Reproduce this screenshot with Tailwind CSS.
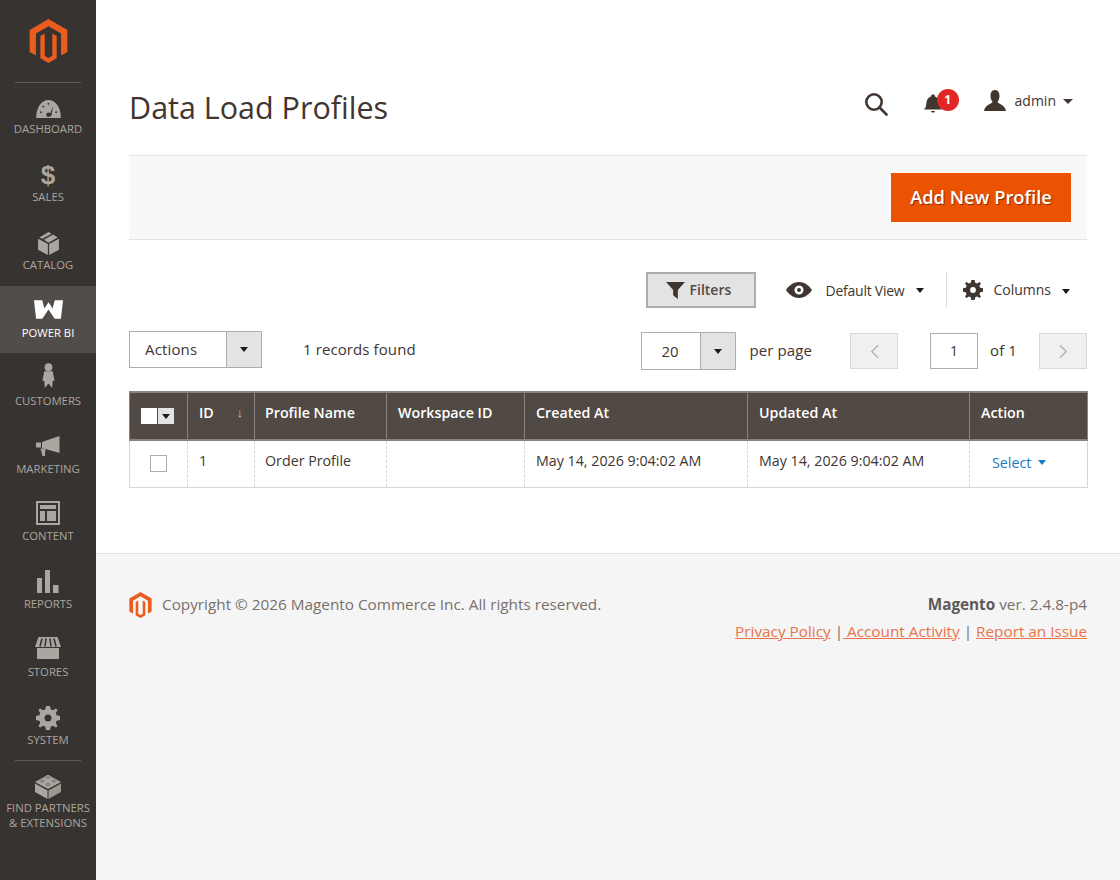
<!DOCTYPE html>
<html lang="en">
<head>
<meta charset="utf-8">
<title>Data Load Profiles</title>
<script src="https://cdn.jsdelivr.net/npm/@tailwindcss/browser@4"></script>
</head>
<body class="bg-[#f5f5f5] font-['Open_Sans',sans-serif] text-[#41362f]">
<div class="flex min-h-[880px] w-[1120px] overflow-hidden">
  <aside class="w-[96px] shrink-0 bg-[#373330] text-[#aaa6a0] text-[11.3px] leading-[15px] text-center">
    <div class="h-[83px] border-b border-[#5f5b57] mx-[15px] flex justify-center pt-[19px] box-border">
      <svg viewBox="0 0 24 28" class="w-[39px] h-[44px]" fill="#eb5c1f"><path d="M12 0 24 7V21L20 23.3V9.3L12 4.6 4 9.3V23.3L0 21V7Z"/><path d="M12 28 6.8 25V10.8L9.6 9.2V23.4L12 24.8 14.4 23.4V9.2L17.2 10.8V25Z"/></svg>
    </div>
    <nav>
      <a class="h-[68px] flex flex-col items-center pt-[16px] box-border">
        <svg viewBox="0 0 26 20" class="w-[25px] h-[19px]" fill="#aaa6a0"><path d="M0 20C0 8 6 1 13 1S26 8 26 20Z"/><path d="M14 17 18 7 16 18Z" fill="#373330"/><circle cx="13" cy="16.5" r="2.4" fill="#373330"/><circle cx="5" cy="14" r="1" fill="#373330"/><circle cx="7.5" cy="8" r="1" fill="#373330"/><circle cx="13" cy="5" r="1" fill="#373330"/><circle cx="21" cy="14" r="1" fill="#373330"/></svg>
        <span class="mt-[3px]">DASHBOARD</span>
      </a>
      <a class="h-[68px] flex flex-col items-center pt-[12px] box-border">
        <span class="h-[25px] text-[26px] leading-[25px] font-bold font-['Liberation_Sans',sans-serif]">$</span>
        <span class="mt-[1px]">SALES</span>
      </a>
      <a class="h-[67px] flex flex-col items-center pt-[12px] box-border">
        <svg viewBox="0 0 20 22" class="w-[21px] h-[23px] mt-[1px]" fill="#aaa6a0"><path d="M0 6.5 9.4 11.5V22L0 17Z"/><path d="M20 6.5 10.6 11.5V22L20 17Z"/><path d="M10 0 13 1.6 4.2 6.4 1.2 5.3Z"/><path d="M14.4 2.4 18.8 5.3 10 10.3 5.6 7.4Z"/></svg>
        <span class="mt-[2px]">CATALOG</span>
      </a>
      <a class="h-[67px] flex flex-col items-center pt-[14px] box-border bg-[#524d49] text-white">
        <svg viewBox="0 0 28 18" class="w-[29px] h-[19px]" fill="#fff"><path d="M0 0H8L10 8 14 2 18 8 20 0H28L26 18H20L14 9 8 18H2Z"/></svg>
        <span class="mt-[6px]">POWER BI</span>
      </a>
      <a class="h-[68px] flex flex-col items-center pt-[9px] box-border">
        <svg viewBox="0 0 14 27" class="w-[13px] h-[27px]" fill="#aaa6a0"><circle cx="7" cy="4.5" r="4.2"/><path d="M2.5 9H11.5L13.5 19 11.5 19.5 11 27 7 22 3 27 2.500 19.500 .5 19Z"/></svg>
        <span class="mt-[4px]">CUSTOMERS</span>
      </a>
      <a class="h-[68px] flex flex-col items-center pt-[15px] box-border">
        <svg viewBox="0 0 24 20" class="w-[24px] h-[20px]" fill="#aaa6a0"><path d="M6 6 23.500 0V17L6 12Z"/><path d="M0 6.500H5V11.500H0Z"/><path d="M4.500 12.500H9.500L9 20H6.500Z"/></svg>
        <span class="mt-[5px]">MARKETING</span>
      </a>
      <a class="h-[68px] flex flex-col items-center pt-[12px] box-border">
        <svg viewBox="0 0 24 24" class="w-[24px] h-[24px]" fill="#aaa6a0"><path fill-rule="evenodd" d="M0 0H24V24H0ZM2 2V22H22V2Z"/><path d="M4 4H20V8H4ZM4 10H9V20H4ZM11 10H20V20H11Z"/></svg>
        <span class="mt-[3px]">CONTENT</span>
      </a>
      <a class="h-[68px] flex flex-col items-center pt-[13px] box-border">
        <svg viewBox="0 0 22 23" class="w-[22px] h-[23px]" fill="#aaa6a0"><path d="M0 8H5V23H0ZM8 0H13V23H8ZM16 15H21.500V23H16Z"/></svg>
        <span class="mt-[3px]">REPORTS</span>
      </a>
      <a class="h-[68px] flex flex-col items-center pt-[12px] box-border">
        <svg viewBox="0 0 26 22" class="w-[26px] h-[22px]" fill="#aaa6a0"><path d="M2 11H24V22H2Z"/><path d="M3.500 0H22.500L26 10H0Z"/><path d="M7 1.500 5 9.500M11 1.500 10 9.500M15 1.500 16 9.500M19 1.500 21 9.500" stroke="#373330" stroke-width="1.600"/></svg>
        <span class="mt-[5px]">STORES</span>
      </a>
      <a class="h-[67px] flex flex-col items-center pt-[13px] box-border">
        <svg viewBox="0 0 24 24" class="w-[24px] h-[24px]" fill="#aaa6a0"><path fill-rule="evenodd" d="M10 0H14L14.700 3.300 17 4.300 19.900 2.400 21.600 4.100 19.700 7 20.700 9.300 24 10V14L20.700 14.700 19.700 17 21.600 19.900 19.900 21.600 17 19.700 14.700 20.700 14 24H10L9.300 20.700 7 19.700 4.100 21.600 2.400 19.900 4.300 17 3.300 14.700 0 14V10L3.300 9.300 4.300 7 2.400 4.100 4.100 2.400 7 4.300 9.300 3.300ZM12 8.500A3.500 3.500 0 1 0 12 15.500 3.500 3.500 0 0 0 12 8.500Z"/></svg>
        <span class="mt-[2px]">SYSTEM</span>
      </a>
      <div class="mx-[15px] border-t border-[#5f5b57] h-[13px] box-border"></div>
      <a class="flex flex-col items-center box-border">
        <svg viewBox="0 0 26 26" class="w-[26px] h-[26px]" fill="#aaa6a0"><path d="M13 2 26 9 13 16 0 9Z"/><path d="M0 10.500 12.500 17.500V26L0 19Z"/><path d="M26 10.500 13.500 17.500V26L26 19Z" fill="#9b9791"/><ellipse cx="13" cy="4.500" rx="3" ry="2" fill="#8a8681" stroke="#aaa6a0" stroke-width=".6"/><ellipse cx="7" cy="8" rx="3" ry="2" fill="#8a8681" stroke="#aaa6a0" stroke-width=".6"/><ellipse cx="19" cy="8" rx="3" ry="2" fill="#8a8681" stroke="#aaa6a0" stroke-width=".6"/><ellipse cx="13" cy="11.500" rx="3" ry="2" fill="#8a8681" stroke="#aaa6a0" stroke-width=".6"/></svg>
        <span class="mt-[1px]">FIND PARTNERS<br>&amp; EXTENSIONS</span>
      </a>
    </nav>
  </aside>

  <div class="flex-1 flex flex-col min-w-0">
    <main class="bg-white h-[554px] box-border border-b border-[#e3e3e3] pl-[33px] pr-[33px]">
      <header class="h-[155px] flex items-start pt-[87px] box-border relative">
        <h1 class="text-[30.500px] leading-[40px] text-[#41362f] font-normal">Data Load Profiles</h1>
        <div class="ml-auto flex items-center -mt-[2px] h-[30px]">
          <svg viewBox="0 0 24 24" class="w-[24px] h-[24px] mt-[8px] mr-[36px]" fill="none" stroke="#41362f" stroke-width="2.600"><circle cx="10" cy="10" r="7.700"/><path d="M15.500 15.500 22.500 22.500" stroke-linecap="round"/></svg>
          <div class="relative w-[34px] h-[30px] mt-[6px] mr-[26px]">
            <svg viewBox="0 0 18 20" class="absolute left-0 top-[6px] w-[18px] h-[20px]" fill="#41362f"><path d="M0 15.500C2.500 13 2 11 2.500 8S5 3 7 2.500C7 1 8 .5 9 .5S11 1 11 2.500C13 3 15 5 15.500 8S15.500 13 18 15.500Z"/><path d="M7 17H11C11 19 7 19 7 17Z"/></svg>
            <span class="absolute left-[13px] top-[1px] w-[22px] h-[22px] rounded-full bg-[#e22626] text-white text-[12px] leading-[22px] font-bold text-center">1</span>
          </div>
          <svg viewBox="0 0 22 21" class="w-[22px] h-[21px] mt-[0px] mr-[9px]" fill="#41362f"><path d="M11 0C14.500 0 15.500 3 15.500 6S14.500 10 13.500 12C14 14 21 14.500 22 21H0C1 14.500 8 14 8.500 12 7.500 10 6.500 9 6.500 6S7.500 0 11 0Z"/></svg>
          <span class="text-[14px] leading-[20px] mt-[2px]">admin</span>
          <span class="ml-[7px] mr-[14px] mt-[3px] w-0 h-0 border-x-[5px] border-x-transparent border-t-[5px] border-t-[#41362f]"></span>
        </div>
      </header>

      <section class="h-[85px] box-border bg-[#f8f8f8] border-y border-[#e3e3e3] flex items-center justify-end pr-[16px]">
        <button class="w-[180px] h-[49px] pb-[2px] bg-[#eb5202] text-white text-[18.300px] font-semibold [text-shadow:1px_1px_1px_rgba(0,0,0,.45)]">Add New Profile</button>
      </section>

      <section class="mt-[32px] h-[36px] flex items-center text-[14px]">
        <button class="ml-auto w-[110px] h-[36px] box-border bg-[#e3e3e3] border-2 border-[#adadad] flex items-center justify-start pl-[18px] gap-[5px] font-semibold text-[#514943]">
          <svg viewBox="0 0 20 18" class="w-[19px] h-[17px]" fill="#41362f"><path d="M0 0H20L12.500 8.500V18L7.500 14V8.500Z"/></svg>
          <span class="-mt-[2px]">Filters</span>
        </button>
        <svg viewBox="0 0 26 16" class="w-[26px] h-[16px] ml-[30px]" fill="#41362f"><path fill-rule="evenodd" d="M13 0C19 0 24 4.500 26 8 24 11.500 19 16 13 16S2 11.500 0 8C2 4.500 7 0 13 0ZM13 3.500A4.500 4.500 0 1 0 13 12.500 4.500 4.500 0 0 0 13 3.500Z"/><circle cx="13" cy="8" r="2"/></svg>
        <span class="ml-[14px] tracking-[-0.25px]">Default View</span>
        <span class="ml-[12px] w-0 h-0 border-x-[4.500px] border-x-transparent border-t-[5px] border-t-[#1f1a17]"></span>
        <span class="ml-[22px] w-px h-[35px] bg-[#dcdcdc]"></span>
        <svg viewBox="0 0 24 24" class="w-[20px] h-[20px] ml-[16px]" fill="#41362f"><path fill-rule="evenodd" d="M10 0H14L14.700 3.300 17 4.300 19.900 2.400 21.600 4.100 19.700 7 20.700 9.300 24 10V14L20.700 14.700 19.700 17 21.600 19.900 19.900 21.600 17 19.700 14.700 20.700 14 24H10L9.300 20.700 7 19.700 4.100 21.600 2.400 19.900 4.300 17 3.300 14.700 0 14V10L3.300 9.300 4.300 7 2.400 4.100 4.100 2.400 7 4.300 9.300 3.300ZM12 8.500A3.500 3.500 0 1 0 12 15.500 3.500 3.500 0 0 0 12 8.500Z"/></svg>
        <span class="ml-[10px] -mt-[2px]">Columns</span>
        <span class="ml-[11px] mr-[17px] mt-[2px] w-0 h-0 border-x-[4.500px] border-x-transparent border-t-[5px] border-t-[#1f1a17]"></span>
      </section>

      <section class="mt-[24px] h-[38px] flex items-center text-[15px]">
        <div class="w-[133px] h-[37px] box-border border border-[#adadad] flex -mt-[3px]">
          <span class="flex-1 pl-[15px] leading-[34px] tracking-[.15px]">Actions</span>
          <span class="w-[35px] bg-[#e3e3e3] border-l border-[#adadad] flex items-center justify-center"><span class="w-0 h-0 border-x-[4.500px] border-x-transparent border-t-[5px] border-t-[#1f1a17]"></span></span>
        </div>
        <span class="ml-[41px] -mt-[4px] tracking-[.1px]">1 records found</span>
        <div class="ml-auto w-[95px] h-[38px] box-border border border-[#adadad] flex">
          <span class="flex-1 pl-[19px] leading-[36px]">20</span>
          <span class="w-[35px] bg-[#e3e3e3] border-l border-[#adadad] flex items-center justify-center"><span class="w-0 h-0 border-x-[4.500px] border-x-transparent border-t-[5px] border-t-[#1f1a17]"></span></span>
        </div>
        <span class="ml-[13px] -mt-[1px] tracking-[.12px]">per page</span>
        <span class="ml-[38px] w-[48px] h-[36px] box-border bg-[#f0f0f0] border border-[#d9d9d9] flex items-center justify-center">
          <svg viewBox="0 0 10 16" class="w-[9px] h-[15px]" fill="none" stroke="#b0b0b0" stroke-width="1.500"><path d="M9 1 2 8 9 15"/></svg>
        </span>
        <span class="ml-[32px] w-[48px] h-[36px] box-border border border-[#adadad] text-center leading-[34px] text-[14px]">1</span>
        <span class="ml-[12px] tracking-[.1px] -mt-[1px]">of 1</span>
        <span class="ml-[22px] w-[48px] h-[36px] box-border bg-[#f0f0f0] border border-[#d9d9d9] flex items-center justify-center">
          <svg viewBox="0 0 10 16" class="w-[9px] h-[15px]" fill="none" stroke="#b0b0b0" stroke-width="1.500"><path d="M1 1 8 8 1 15"/></svg>
        </span>
      </section>

      <table class="mt-[21px] w-[958px] table-fixed border-collapse text-[14.250px] text-left">
        <colgroup>
          <col class="w-[58px]"><col class="w-[67px]"><col class="w-[132px]"><col class="w-[138px]"><col class="w-[223px]"><col class="w-[222px]"><col class="w-[118px]">
        </colgroup>
        <thead>
          <tr class="h-[48px] bg-[#514943] text-white font-semibold border-y-2 border-y-[#8a837e]">
            <th class="border-x border-[#8a837e] font-semibold pb-[6px]"><span class="flex pl-[11px] gap-[1px] mt-[6px]"><span class="w-[16px] h-[16px] bg-white"></span><span class="w-[16px] h-[16px] bg-[#e3e3e3] flex items-center justify-center"><span class="w-0 h-0 border-x-[4px] border-x-transparent border-t-[5px] border-t-[#1f1a17]"></span></span></span></th>
            <th class="border-x border-[#8a837e] font-semibold pl-[11px] pb-[6px] relative">ID<span class="absolute right-[11px] top-[10px] text-[#c9c5c2] text-[13px] font-semibold">↓</span></th>
            <th class="border-x border-[#8a837e] font-semibold pl-[10px] pb-[6px]">Profile Name</th>
            <th class="border-x border-[#8a837e] font-semibold pl-[11px] pb-[6px]">Workspace ID</th>
            <th class="border-x border-[#8a837e] font-semibold pl-[11px] pb-[6px]">Created At</th>
            <th class="border-x border-[#8a837e] font-semibold pl-[11px] pb-[6px]">Updated At</th>
            <th class="border-x border-[#8a837e] font-semibold pl-[11px] pb-[6px]">Action</th>
          </tr>
        </thead>
        <tbody>
          <tr class="h-[47px] border-b border-[#d6d6d6]">
            <td class="border-l border-[#d6d6d6] border-r border-r-[#d6d6d6] [border-right-style:dashed] text-center align-middle"><span class="inline-block w-[17px] h-[17px] border border-[#adadad] align-middle -mt-[4px]"></span></td>
            <td class="border-r border-dashed border-[#d6d6d6] pl-[11px] pb-[6px]">1</td>
            <td class="border-r border-dashed border-[#d6d6d6] pl-[10px] pb-[6px]">Order Profile</td>
            <td class="border-r border-dashed border-[#d6d6d6]"></td>
            <td class="border-r border-dashed border-[#d6d6d6] pl-[11px] pb-[6px]">May 14, 2026 9:04:02 AM</td>
            <td class="border-r border-dashed border-[#d6d6d6] pl-[11px] pb-[6px]">May 14, 2026 9:04:02 AM</td>
            <td class="border-r border-[#d6d6d6] pl-[22px] text-[#1979c3] pb-[3px]"><span class="inline-flex items-center gap-[7px]">Select<span class="w-0 h-0 border-x-[4.500px] border-x-transparent border-t-[5px] border-t-[#1979c3]"></span></span></td>
          </tr>
        </tbody>
      </table>
    </main>

    <footer class="flex justify-between px-[33px] pt-[39px] text-[15.300px] text-[#77706b]">
      <div class="flex items-center h-[24px]">
        <svg viewBox="0 0 24 28" class="w-[23px] h-[26px]" fill="#eb5c1f"><path d="M12 0 24 7V21L20 23.300V9.300L12 4.600 4 9.300V23.300L0 21V7Z"/><path d="M12 28 6.800 25V10.800L9.600 9.200V23.400L12 24.800 14.400 23.400V9.200L17.200 10.800V25Z"/></svg>
        <span class="ml-[10px] -mt-[2px]">Copyright © 2026 Magento Commerce Inc. All rights reserved.</span>
      </div>
      <div class="text-right leading-[27px] -mt-[2px]">
        <div><b class="font-bold text-[#5c5a58]">Magento</b> ver. 2.4.8-p4</div>
        <div><a class="text-[#e9734a] underline">Privacy Policy</a> <span>|</span><a class="text-[#e9734a] underline"> Account Activity</a> <span>|</span> <a class="text-[#e9734a] underline">Report an Issue</a></div>
      </div>
    </footer>
  </div>
</div>
</body>
</html>
